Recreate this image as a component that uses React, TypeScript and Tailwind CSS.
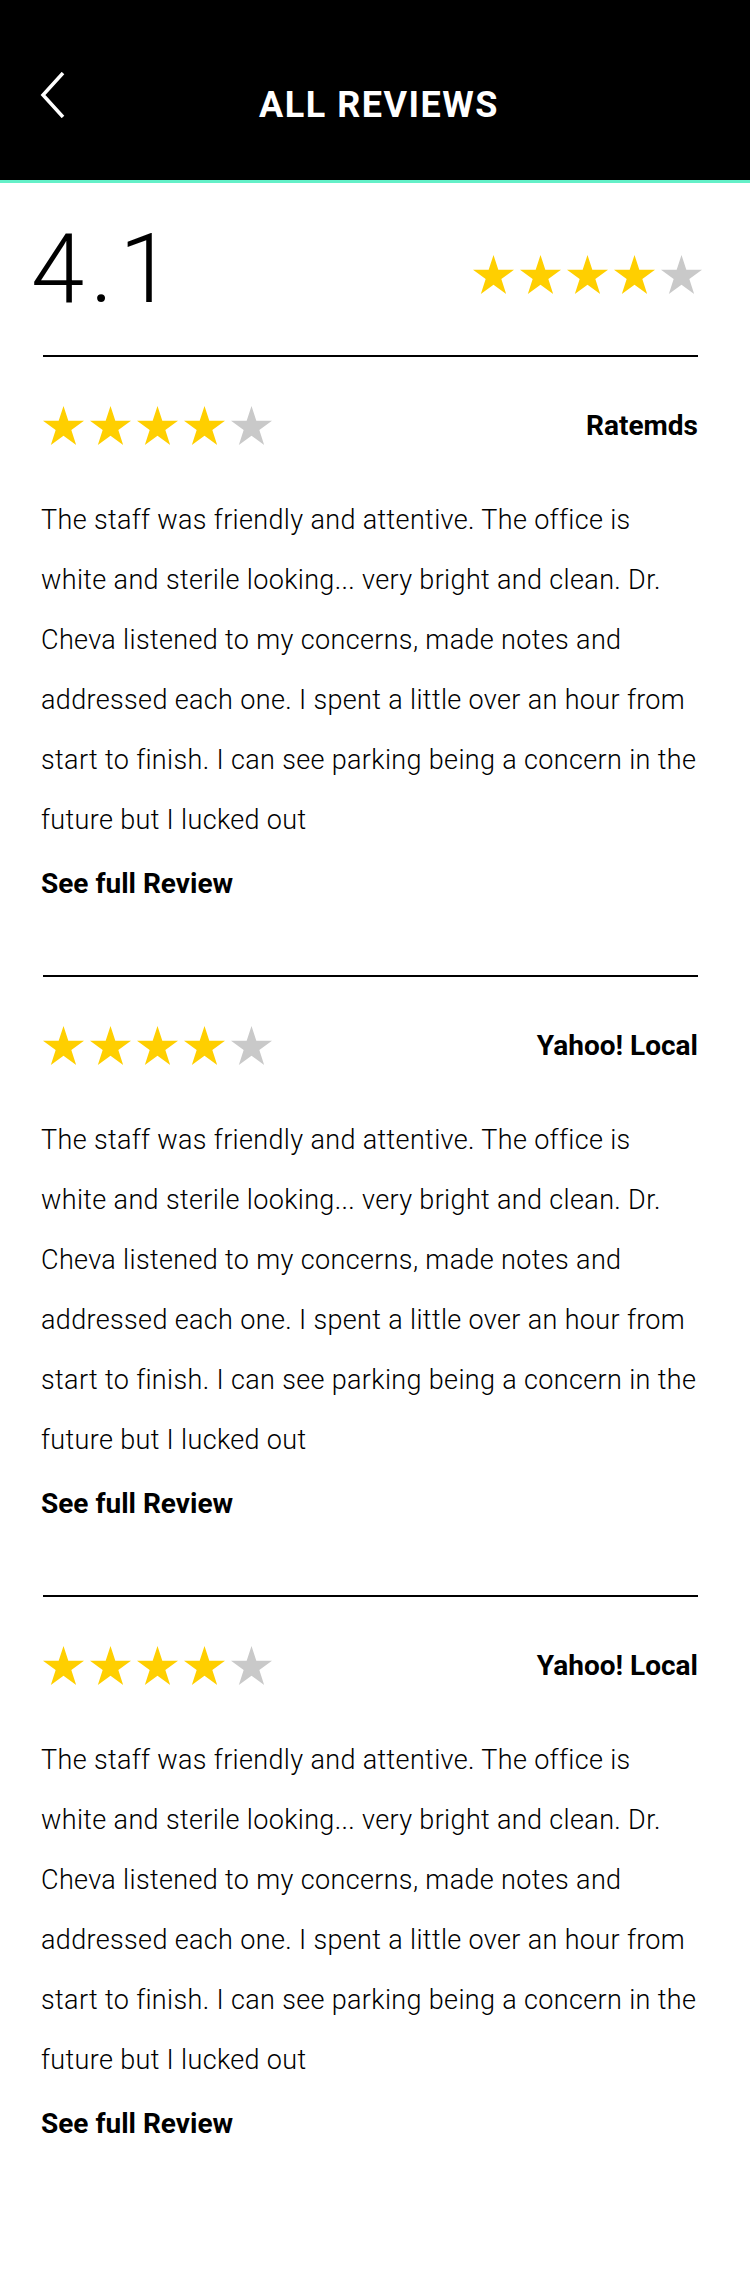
const reviewLines = [
  "The staff was friendly and attentive. The office is",
  "white and sterile looking... very bright and clean. Dr.",
  "Cheva listened to my concerns, made notes and",
  "addressed each one. I spent a little over an hour from",
  "start to finish. I can see parking being a concern in the",
  "future but I lucked out",
]

const reviews = [
  { source: "Ratemds", rating: 4 },
  { source: "Yahoo! Local", rating: 4 },
  { source: "Yahoo! Local", rating: 4 },
]

function Star({ filled }: { filled: boolean }) {
  return (
    <svg viewBox="2.4 0 95.2 90.5" className="h-[39px] w-[41px] shrink-0">
      <polygon
        points="50,0 61.2,34.5 97.6,34.5 68.2,55.9 79.4,90.5 50,69.1 20.6,90.5 31.8,55.9 2.4,34.5 38.8,34.5"
        fill={filled ? "#ffcf00" : "#c9c9c9"}
      />
    </svg>
  )
}

function Stars({ rating }: { rating: number }) {
  return (
    <div className="flex gap-[6px]">
      {[1, 2, 3, 4, 5].map((i) => (
        <Star key={i} filled={i <= rating} />
      ))}
    </div>
  )
}

export default function App() {
  return (
    <div className="min-h-screen bg-white text-black font-['Roboto','Liberation_Sans',sans-serif]">
      <header className="grid h-[183px] grid-cols-[1fr_auto_1fr] items-start border-b-[3px] border-[#64f0c8] bg-black pt-[72px]">
        <button className="pl-[40px] text-left">
          <svg width="26" height="46" viewBox="0 0 26 46" fill="none">
            <path d="M23 1 L3 23 L23 45" stroke="white" strokeWidth="3.5" />
          </svg>
        </button>
        <h1 className="mt-[15px] pl-[8px] text-[36px] font-bold leading-none tracking-[1.5px] text-white">
          ALL REVIEWS
        </h1>
        <div />
      </header>

      <section className="flex items-start justify-between pl-[31px] pr-[48px] pt-[38px]">
        <div className="text-[96px] font-light leading-none tracking-[6px]">4.1</div>
        <div className="mt-[34px]">
          <Stars rating={4} />
        </div>
      </section>

      <div className="mt-[38px]">
        {reviews.map((r, idx) => (
          <article key={idx} className="pb-[76px]">
            <div className="ml-[43px] mr-[52px] h-[2px] bg-black" />
            <div className="pl-[43px] pr-[52px] pt-[49px]">
              <div className="flex items-center justify-between">
                <Stars rating={r.rating} />
                <span className="text-[28px] font-bold leading-none">{r.source}</span>
              </div>
            </div>
            <div className="pl-[41px] pr-[52px]">
              <p className="mt-[45px] whitespace-nowrap text-[27px] font-light leading-[60px] tracking-[0.35px]">
                {reviewLines.map((line, i) => (
                  <span key={i}>
                    {line}
                    {i < reviewLines.length - 1 && <br />}
                  </span>
                ))}
              </p>
              <a className="mt-[19px] block text-[28px] font-bold leading-[30px]">See full Review</a>
            </div>
          </article>
        ))}
      </div>
    </div>
  )
}
